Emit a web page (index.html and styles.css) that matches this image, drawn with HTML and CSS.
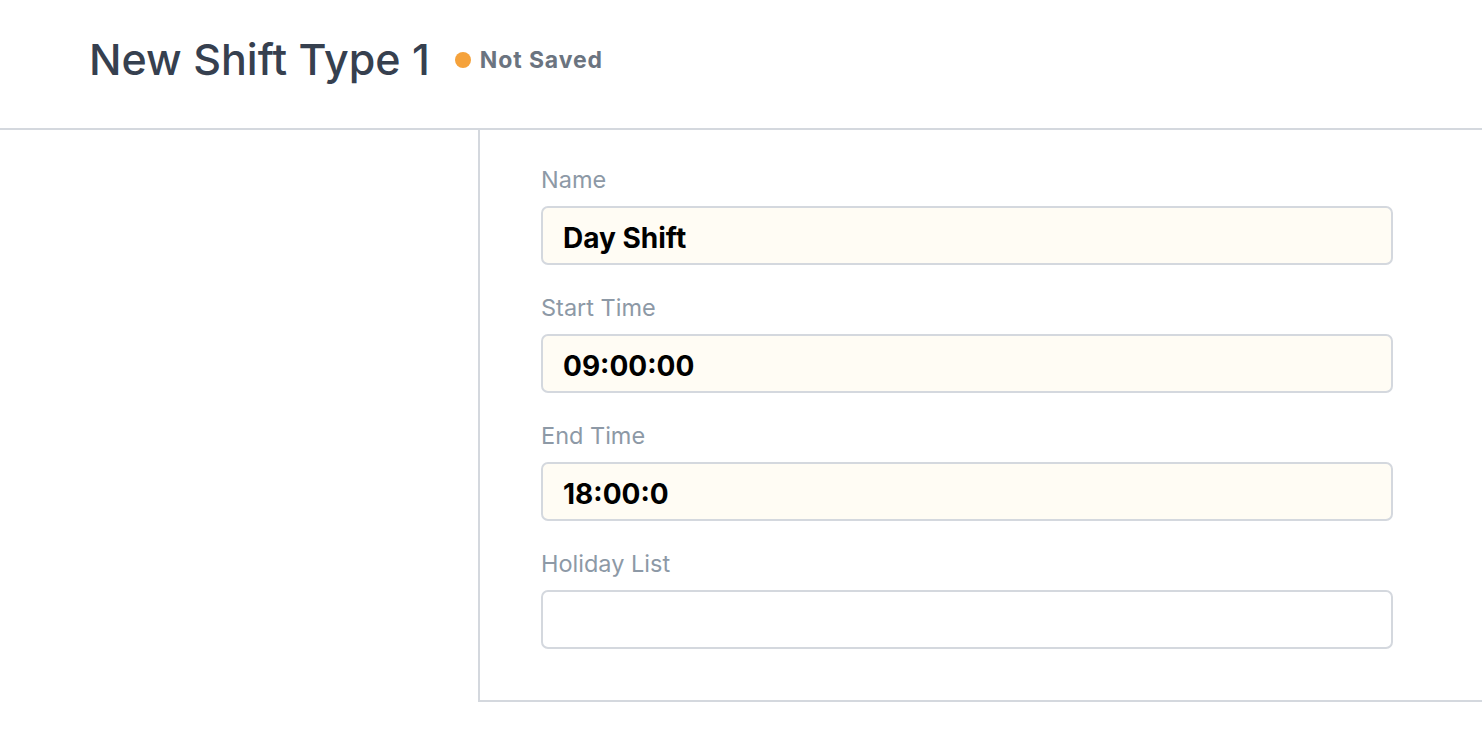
FILE: index.html
```html
<!DOCTYPE html>
<html>
<head>
<meta charset="utf-8">
<link rel="stylesheet" href="styles.css">
</head>
<body>
<header class="page-head">
  <h1 class="title">New Shift Type 1</h1>
  <span class="status"><span class="dot"></span>Not Saved</span>
</header>
<main class="layout">
  <aside class="sidebar"></aside>
  <section class="form-panel">
    <div class="field">
      <label class="label">Name</label>
      <div class="input filled">Day Shift</div>
    </div>
    <div class="field">
      <label class="label">Start Time</label>
      <div class="input filled">09:00:00</div>
    </div>
    <div class="field">
      <label class="label">End Time</label>
      <div class="input filled">18:00:0</div>
    </div>
    <div class="field">
      <label class="label">Holiday List</label>
      <div class="input"></div>
    </div>
  </section>
</main>
</body>
</html>
```
FILE: styles.css
```css
* { box-sizing: border-box; }
html, body { margin: 0; padding: 0; background: #fff; }
body { font-family: Inter, "Noto Sans", sans-serif; }

.page-head {
  height: 130px;
  border-bottom: 2px solid #d4d8de;
  display: flex;
  align-items: center;
  padding: 0 0 10px 89px;
  gap: 25px;
}
.title {
  margin: 0;
  font-size: 43px;
  font-weight: 500;
  color: #36404f;
  letter-spacing: 0;
}
.status {
  display: flex;
  align-items: center;
  gap: 9px;
  font-size: 23px;
  font-weight: 700;
  letter-spacing: 0.9px;
  color: #6b7480;
  padding-top: 2px;
}
.dot {
  width: 16px;
  height: 16px;
  border-radius: 50%;
  background: #f5a23b;
}

.layout { display: flex; }
.sidebar { width: 478px; flex: none; }
.form-panel {
  flex: 1;
  border-left: 2px solid #d4d8de;
  border-bottom: 2px solid #d4d8de;
  padding: 37px 89px 51px 61px;
  display: flex;
  flex-direction: column;
  gap: 30px;
}
.field { display: flex; flex-direction: column; gap: 13px; }
.label {
  font-size: 23.5px;
  line-height: 26px;
  color: #8d99a6;
}
.input {
  height: 59px;
  border: 2px solid #d4d8de;
  border-radius: 7px;
  background: #fff;
  padding: 4px 20px 0;
  display: flex;
  align-items: center;
  font-size: 28px;
  font-weight: 700;
  color: #000;
}
.input.filled { background: #fffcf4; }
```
